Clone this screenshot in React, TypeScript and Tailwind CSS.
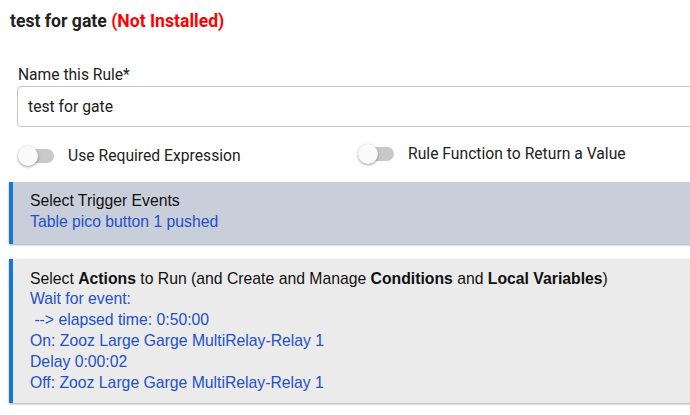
import React from "react";

function Toggle({ label }: { label: string }) {
  return (
    <div className="flex items-center">
      <div className="relative w-[36px] h-[20px] flex items-center">
        <div className="absolute left-[3px] right-0 h-[14px] rounded-full bg-[#c9c9c9]" />
        <div className="absolute left-0 top-0 w-[20px] h-[20px] rounded-full bg-[#fafafa] shadow-[0_1px_3px_rgba(0,0,0,0.4)]" />
      </div>
      <span className="ml-[14px] text-[15.7px] text-[#222]">{label}</span>
    </div>
  );
}

export default function App() {
  return (
    <div
      className="w-[690px] h-[415px] overflow-hidden bg-white relative"
      style={{ fontFamily: "Roboto, 'Liberation Sans', sans-serif" }}
    >
      <div className="pl-[10px] pt-[10px] h-[33px] text-[17.6px] font-bold leading-[22px] text-[#212121]">
        test for gate <span className="text-[#ff0000]">(Not Installed)</span>
      </div>
      <div className="pl-[18px] pt-[32px]">
        <div className="text-[15.6px] leading-[20px] text-[#212121]">Name this Rule*</div>
        <div className="mt-[1px] -ml-[1px] w-[700px] h-[41px] border border-[#c4c4c4] rounded-[4px] pl-[10px] flex items-center text-[15.7px] text-[#212121]">
          test for gate
        </div>
        <div className="flex mt-[17px] h-[20px]">
          <div className="w-[340px]">
            <Toggle label="Use Required Expression" />
          </div>
          <Toggle label="Rule Function to Return a Value" />
        </div>
      </div>
      <div
        className="ml-[9px] mt-[18px] w-[700px] flex flex-col gap-[15px] text-[15.75px] leading-[20.8px]"
        style={{ fontFamily: "'Liberation Sans', Arial, sans-serif" }}
      >
        <div className="border-l-[4px] border-[#1976d2] bg-[#c9cfda] pl-[17px] pt-[9px] pb-[11px] shadow-[0_1px_2px_rgba(0,0,0,0.35)]">
          <div className="text-[#111]">Select Trigger Events</div>
          <div className="text-[#2450c8]">Table pico button 1 pushed</div>
        </div>
        <div className="border-l-[4px] border-[#1976d2] bg-[#ebebeb] pl-[17px] py-[10px] shadow-[0_1px_2px_rgba(0,0,0,0.35)]">
          <div className="text-[#111]">
            Select <b>Actions</b> to Run (and Create and Manage <b>Conditions</b> and <b>Local Variables</b>)
          </div>
          <div className="text-[#2450c8]">
            <div>Wait for event:</div>
            <div>&nbsp;--&gt; elapsed time: 0:50:00</div>
            <div>On: Zooz Large Garge MultiRelay-Relay 1</div>
            <div>Delay 0:00:02</div>
            <div>Off: Zooz Large Garge MultiRelay-Relay 1</div>
          </div>
        </div>
      </div>
    </div>
  );
}
